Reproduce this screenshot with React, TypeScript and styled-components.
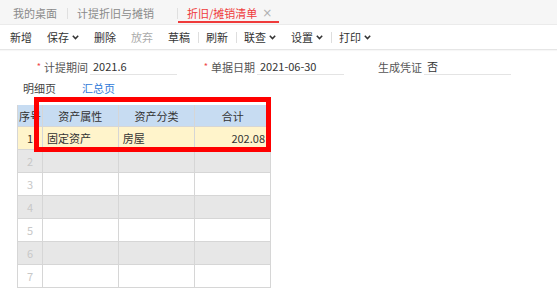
import styled, { createGlobalStyle } from "styled-components";

const Global = createGlobalStyle`
  html, body {
    margin: 0;
    padding: 0;
    background: #fff;
    overflow: hidden;
  }
  body {
    font-family: "Noto Sans CJK SC", "Noto Sans", sans-serif;
    font-size: 11px;
    color: #333;
  }
`;

const Page = styled.div`
  width: 557px;
  height: 290px;
  overflow: hidden;
  display: flex;
  flex-direction: column;
`;

const TabBar = styled.div`
  display: flex;
  align-items: stretch;
  height: 24px;
  padding-left: 4px;
  background: #f6f6f6;
  border-bottom: 1px solid #ebebeb;
`;

const Tab = styled.div<{ $active?: boolean }>`
  position: relative;
  display: flex;
  align-items: center;
  padding: 2px ${({ $active }) => ($active ? "2px" : "10px")} 0 9px;
  color: ${({ $active }) => ($active ? "#ef3b3b" : "#8a8a8a")};
  white-space: nowrap;

  &::after {
    content: "";
    display: ${({ $active }) => ($active ? "block" : "none")};
    position: absolute;
    left: 0;
    right: 0;
    bottom: 1px;
    height: 2px;
    background: #ef3b3b;
  }
`;

const TabGap = styled.span<{ $w: number }>`
  display: inline-block;
  width: ${({ $w }) => $w}px;
`;

const Close = styled.span`
  display: inline-flex;
  justify-content: center;
  width: 20px;
  color: #b0b0b0;
  font-family: "DejaVu Sans", sans-serif;
  font-size: 12px;
`;

const TabSep = styled.span`
  align-self: center;
  width: 1px;
  height: 11px;
  margin-top: 2px;
  background: #e0e0e0;
`;

const Toolbar = styled.div`
  display: flex;
  align-items: center;
  height: 24px;
  padding-left: 2.5px;
  border-bottom: 1px solid #e6e6e6;
  box-shadow: 0 1px 1px rgba(0, 0, 0, 0.03);
`;

const ToolButton = styled.span<{ $disabled?: boolean }>`
  display: inline-flex;
  align-items: center;
  gap: 3px;
  padding: 0 7.5px;
  color: ${({ $disabled }) => ($disabled ? "#ababab" : "#333")};
  white-space: nowrap;
`;

const ToolSep = styled.span`
  width: 1px;
  height: 11px;
  background: #dedede;
`;

const FormRow = styled.div`
  display: flex;
  padding: 8px 0 0 10px;
  height: 17px;
`;

const Field = styled.div`
  display: flex;
  align-items: stretch;
`;

const Label = styled.label`
  display: flex;
  align-items: center;
  justify-content: flex-end;
  width: 80px;
  padding-right: 2px;
  box-sizing: border-box;
  color: #555;
`;

const Star = styled.span`
  color: #f04848;
  margin-right: 3px;
  font-size: 9px;
`;

const Value = styled.div`
  display: flex;
  align-items: center;
  width: 87px;
  padding-left: 3px;
  box-sizing: border-box;
  border-bottom: 1px solid #e4e4e4;
  color: #333;
`;

const SubTabs = styled.div`
  display: flex;
  height: 18px;
  margin-top: 4px;
  padding-left: 10px;
`;

const SubTab = styled.span<{ $active?: boolean }>`
  display: flex;
  align-items: center;
  padding: 0 13px;
  color: ${({ $active }) => ($active ? "#2f7ad8" : "#444")};
`;

const TableWrap = styled.div`
  position: relative;
  margin: 8px 0 0 17px;
  width: 254px;
`;

const Grid = styled.table`
  border-collapse: collapse;
  table-layout: fixed;
`;

const Th = styled.th<{ $w: number }>`
  width: ${({ $w }) => $w}px;
  height: 21px;
  padding: 0;
  background: #c7dcf2;
  border: 1px solid #d6d6d6;
  border-top: none;
  font-weight: normal;
  color: #333;
  text-align: center;
  white-space: nowrap;
  overflow: hidden;
`;

const Tr = styled.tr<{ $tone: "hit" | "grey" | "white" }>`
  background: ${({ $tone }) =>
    $tone === "hit" ? "#fff4cb" : $tone === "grey" ? "#e7e7e7" : "#fff"};
`;

const Td = styled.td<{ $align?: string; $muted?: boolean }>`
  height: 22px;
  padding: 0 5px 0 4px;
  border: 1px solid #d6d6d6;
  text-align: ${({ $align }) => $align || "left"};
  color: ${({ $muted }) => ($muted ? "#c8c8c8" : "#333")};
  white-space: nowrap;
  overflow: hidden;
`;

const NoCell = styled(Td)`
  padding: 0;
  text-align: center;
`;

const Highlight = styled.div`
  position: absolute;
  left: 17px;
  top: -8px;
  width: 237px;
  height: 55px;
  box-sizing: border-box;
  border: 5px solid #ff0000;
  pointer-events: none;
`;

function Chevron() {
  return (
    <svg width="7" height="5" viewBox="0 0 7 5">
      <polyline
        points="0.8,0.8 3.5,3.6 6.2,0.8"
        fill="none"
        stroke="#333"
        strokeWidth="1.5"
      />
    </svg>
  );
}

const rows: { no: number; attr: string; kind: string; total: string }[] = [
  { no: 1, attr: "固定资产", kind: "房屋", total: "202.08" },
];

export default function App() {
  const blanks = [2, 3, 4, 5, 6, 7];
  return (
    <Page>
      <Global />
      <TabBar>
        <Tab>我的桌面</Tab>
        <TabSep />
        <Tab>
          计提折旧与摊销
          <TabGap $w={13} />
        </Tab>
        <TabSep />
        <Tab $active>
          折旧/摊销清单
          <Close>×</Close>
        </Tab>
      </TabBar>

      <Toolbar>
        <ToolButton>新增</ToolButton>
        <ToolButton>
          保存
          <Chevron />
        </ToolButton>
        <ToolButton>删除</ToolButton>
        <ToolButton $disabled>放弃</ToolButton>
        <ToolButton>草稿</ToolButton>
        <ToolSep />
        <ToolButton>刷新</ToolButton>
        <ToolSep />
        <ToolButton>
          联查
          <Chevron />
        </ToolButton>
        <ToolButton>
          设置
          <Chevron />
        </ToolButton>
        <ToolSep />
        <ToolButton>
          打印
          <Chevron />
        </ToolButton>
      </Toolbar>

      <FormRow>
        <Field>
          <Label>
            <Star>*</Star>计提期间
          </Label>
          <Value>2021.6</Value>
        </Field>
        <Field>
          <Label>
            <Star>*</Star>单据日期
          </Label>
          <Value>2021-06-30</Value>
        </Field>
        <Field>
          <Label>生成凭证</Label>
          <Value>否</Value>
        </Field>
      </FormRow>

      <SubTabs>
        <SubTab>明细页</SubTab>
        <SubTab $active>汇总页</SubTab>
      </SubTabs>

      <TableWrap>
        <Grid>
          <thead>
            <tr>
              <Th $w={24}>序号</Th>
              <Th $w={75}>资产属性</Th>
              <Th $w={76}>资产分类</Th>
              <Th $w={75}>合计</Th>
            </tr>
          </thead>
          <tbody>
            {rows.map((r) => (
              <Tr key={r.no} $tone="hit">
                <NoCell>{r.no}</NoCell>
                <Td>{r.attr}</Td>
                <Td>{r.kind}</Td>
                <Td $align="right">{r.total}</Td>
              </Tr>
            ))}
            {blanks.map((n) => (
              <Tr key={n} $tone={n % 2 === 0 ? "grey" : "white"}>
                <NoCell $muted>{n}</NoCell>
                <Td />
                <Td />
                <Td />
              </Tr>
            ))}
          </tbody>
        </Grid>
        <Highlight />
      </TableWrap>
    </Page>
  );
}
